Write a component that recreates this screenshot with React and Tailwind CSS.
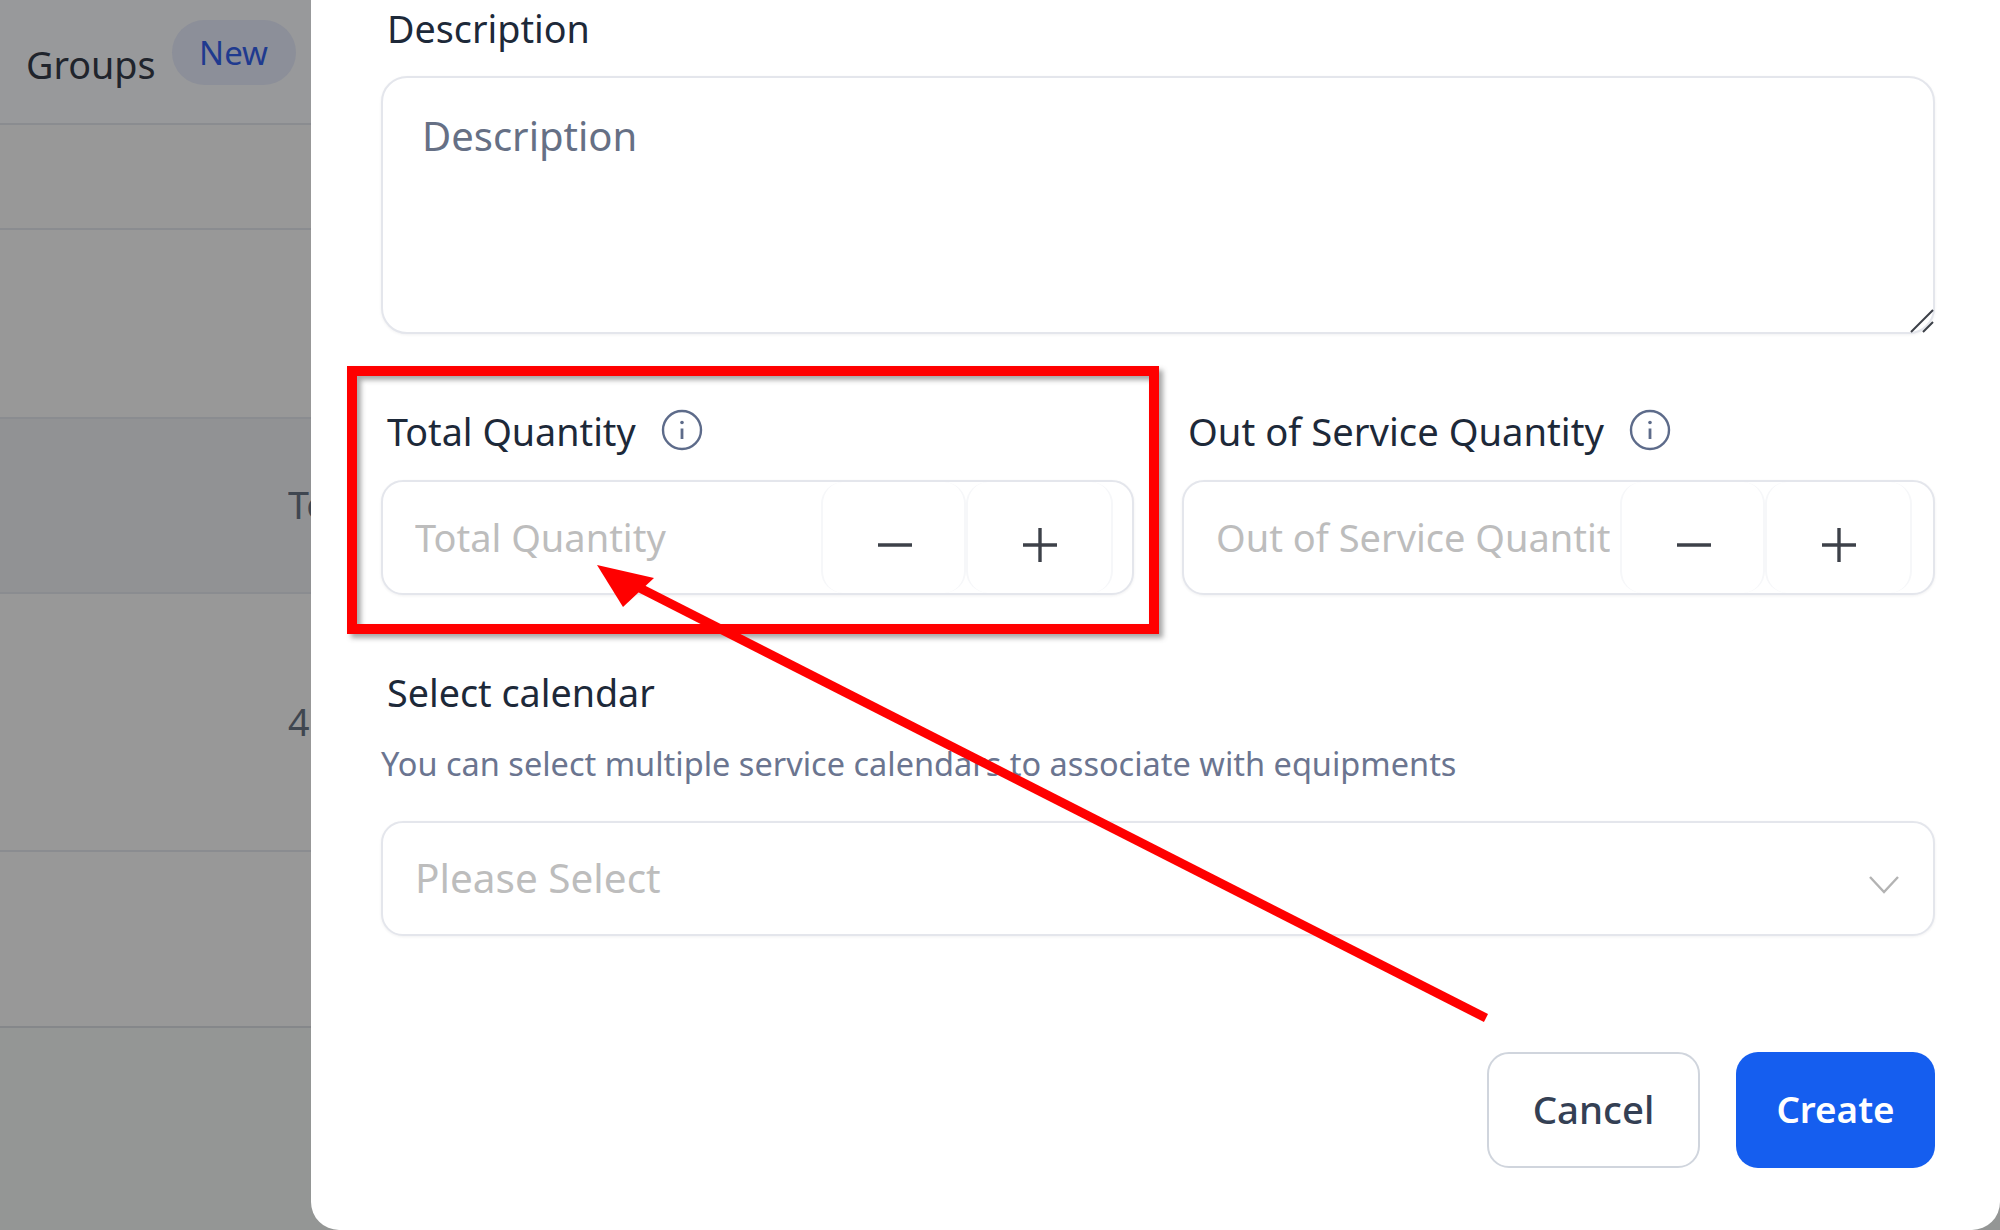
import React from "react";

function InfoIcon() {
  return (
    <svg width="42" height="42" viewBox="0 0 42 42" fill="none" className="shrink-0 mb-[5px] -ml-[1px]">
      <circle cx="21" cy="21" r="19" stroke="#5d6b8a" strokeWidth="2.4" />
      <path d="M21 19.5V30" stroke="#5d6b8a" strokeWidth="2.8" />
      <circle cx="21" cy="13.5" r="1.8" fill="#5d6b8a" />
    </svg>
  );
}

function StepButton({ plus }) {
  return (
    <div className={`h-full flex items-center justify-center rounded-[22px] border-x-2 border-[#f6f7f9] pt-[14px] ${plus ? "w-[147px]" : "w-[145px] pl-[2px]"}`}>
      <svg width="36" height="36" viewBox="0 0 36 36" fill="none">
        <path d="M1 18H35" stroke="#3d4149" strokeWidth="3.4" />
        {plus && <path d="M18 1V35" stroke="#3d4149" strokeWidth="3.4" />}
      </svg>
    </div>
  );
}

function QuantityField({ label, labelClass, inputClass }) {
  return (
    <div>
      <div className={`h-[58px] flex items-center gap-[26px] pl-[6px] text-[#1d2939] ${labelClass}`}>
        <span>{label}</span>
        <InfoIcon />
      </div>
      <div className="mt-[19px] h-[115px] flex rounded-[22px] border-2 border-[#e4e6ec] bg-white shadow-[0_1px_3px_rgba(16,24,40,0.06)]">
        <input
          placeholder={label}
          className={`min-w-0 h-full outline-none bg-transparent pl-[32px] pr-[10px] pb-[2px] text-[38px] text-[#1d2939] placeholder:text-[#bdbdbd] ${inputClass}`}
        />
        <StepButton />
        <StepButton plus />
      </div>
    </div>
  );
}

function BackRow({ heightClass, bgClass, children, borderClass = "border-[#8a8c90]" }) {
  return (
    <div className={`${heightClass} ${bgClass} ${borderClass} border-b-2 flex items-center justify-end whitespace-nowrap text-[#3f4650]`}>
      {children}
    </div>
  );
}

export default function App() {
  return (
    <div className="relative w-[2000px] h-[1230px] overflow-hidden flex bg-[#949695] font-['Noto_Sans','Open_Sans',sans-serif] text-[37.7px]">
      <div className="w-[311px] shrink-0 overflow-hidden">
        <div className="h-[125px] bg-[#98999b] border-b-2 border-[#8a8c90] flex pl-[26px]">
          <span className="mt-[38px] h-[54px] leading-[54px] text-[#20242c]">Groups</span>
          <span className="ml-[16px] mt-[20px] w-[124px] h-[65px] rounded-full bg-[#8c8f99] text-[#1f3a8f] text-[33px] flex items-center justify-center">New</span>
        </div>
        <BackRow heightClass="h-[105px]" bgClass="bg-[#989898]" />
        <BackRow heightClass="h-[189px]" bgClass="bg-[#989898]" />
        <BackRow heightClass="h-[175px]" bgClass="bg-[#919294]">
          <span className="w-[23px] overflow-hidden">To</span>
        </BackRow>
        <BackRow heightClass="h-[258px]" bgClass="bg-[#989898]">
          <span className="w-[23px] overflow-hidden">4</span>
        </BackRow>
        <BackRow heightClass="h-[176px]" bgClass="bg-[#989898]" borderClass="border-[#85878a]" />
      </div>

      <div className="relative flex-1 bg-white rounded-bl-[28px] rounded-br-[28px] pl-[70px] pr-[65px]">
        <div className="h-[58px] flex items-center pl-[6px] text-[#1d2939]">Description</div>
        <div className="relative mt-[18px]">
          <textarea
            placeholder="Description"
            className="block w-full h-[258px] resize-none rounded-[26px] border-2 border-[#e4e6ec] bg-white px-[39px] py-[28px] outline-none text-[40px] text-[#1d2939] placeholder:text-[#667085] shadow-[0_1px_3px_rgba(16,24,40,0.06)]"
          />
          <svg width="26" height="28" viewBox="0 0 26 28" fill="none" className="absolute right-0 bottom-0">
            <path d="M2 26L24 4M14 26L24 16" stroke="#3d4149" strokeWidth="2" />
          </svg>
        </div>

        <div className="mt-[69px] grid grid-cols-2 gap-[48px]">
          <QuantityField label="Total Quantity" labelClass="" inputClass="w-[438px]" />
          <QuantityField label="Out of Service Quantity" labelClass="text-[38.2px]" inputClass="w-[436px]" />
        </div>

        <div className="mt-[69px] h-[58px] flex items-center pl-[6px] text-[#1d2939]">Select calendar</div>
        <div className="mt-[20px] h-[44px] flex items-center text-[32.5px] text-[#6b7590] whitespace-nowrap">
          You can select multiple service calendars to associate with equipments
        </div>
        <div className="mt-[35px] h-[115px] flex items-center justify-between rounded-[22px] border-2 border-[#e4e6ec] bg-white pl-[32px] pr-[33px] text-[40.5px] text-[#bdbdbd] shadow-[0_1px_3px_rgba(16,24,40,0.06)]">
          <span>Please Select</span>
          <svg width="32" height="20" viewBox="0 0 32 20" fill="none" className="mt-[12px]">
            <path d="M2 2L16 17L30 2" stroke="#b3b3b3" strokeWidth="2.4" />
          </svg>
        </div>

        <div className="mt-[116px] flex justify-end gap-[36px]">
          <button className="w-[213px] h-[116px] rounded-[22px] border-2 border-[#d0d5dd] bg-white text-[#344054] font-medium text-[38.4px]">Cancel</button>
          <button className="w-[199px] h-[116px] rounded-[22px] bg-[#155eef] text-white font-semibold text-[36.8px]">Create</button>
        </div>
      </div>

      <div className="absolute left-[347px] top-[366px] w-[812px] h-[268px] border-[10px] border-[#ff0000] shadow-[4px_4px_5px_rgba(60,60,60,0.45),inset_4px_4px_5px_rgba(60,60,60,0.45)]" />
      <svg width="2000" height="1230" viewBox="0 0 2000 1230" fill="none" className="absolute left-0 top-0 pointer-events-none">
        <path d="M1486 1018L630 583" stroke="#ff0000" strokeWidth="9" />
        <path d="M597 565L654 578L623 607Z" fill="#ff0000" />
      </svg>
    </div>
  );
}
